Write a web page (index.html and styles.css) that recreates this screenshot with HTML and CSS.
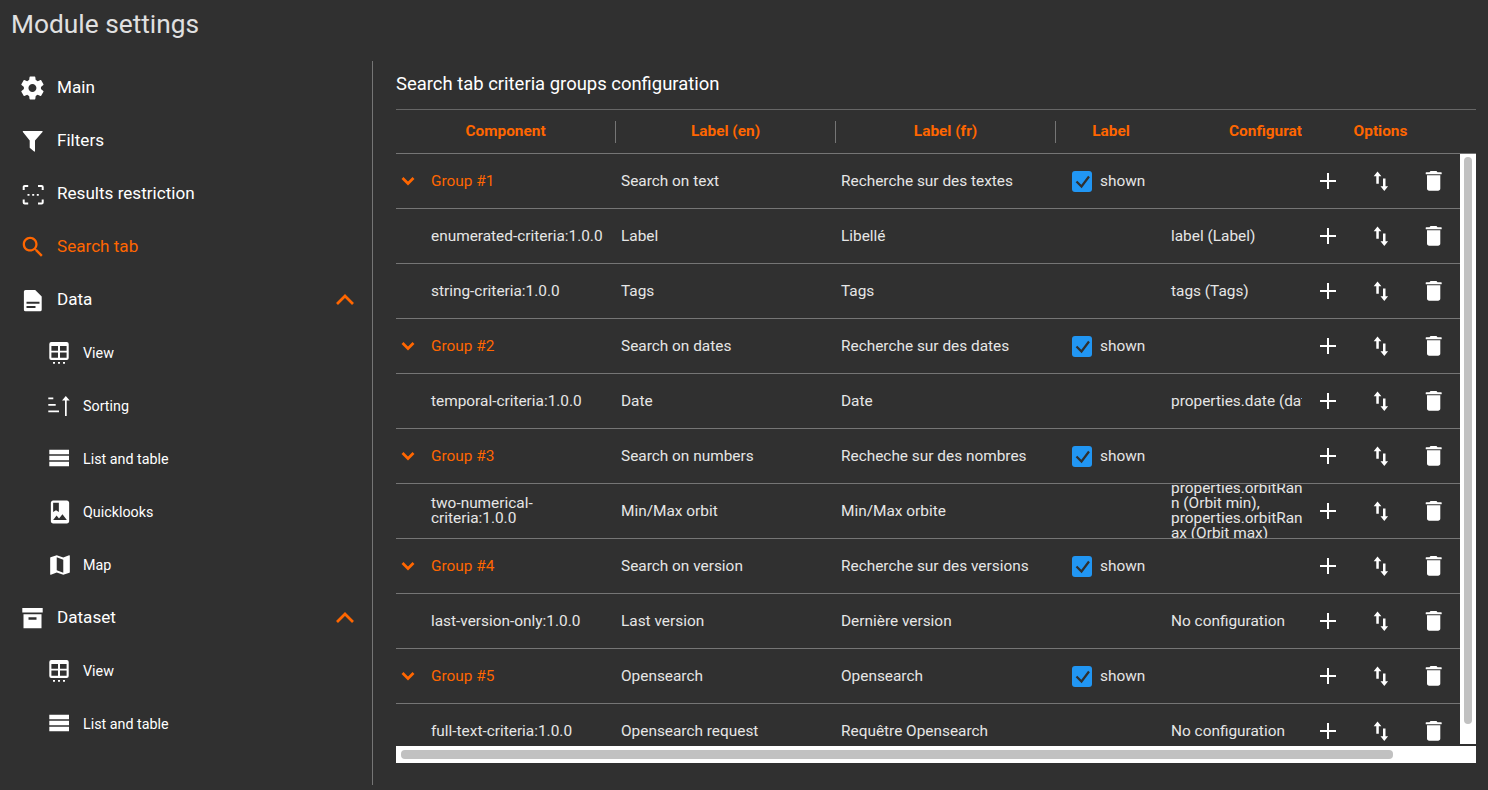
FILE: index.html
```html
<!DOCTYPE html>
<html lang="en">
<head>
  <meta charset="UTF-8" />
  <title>Module settings</title>
  <link rel="stylesheet" href="styles.css">
</head>
<body>
  <svg class="icon-defs" xmlns="http://www.w3.org/2000/svg">
    <symbol id="i-gear" viewBox="2 1.5 21 21"><path d="M19.43 12.98c.04-.32.07-.64.07-.98s-.03-.66-.07-.98l2.11-1.65c.19-.15.24-.42.12-.64l-2-3.46c-.12-.22-.39-.3-.61-.22l-2.49 1c-.52-.4-1.08-.73-1.69-.98l-.38-2.65C14.46 2.18 14.25 2 14 2h-4c-.25 0-.46.18-.49.42l-.38 2.65c-.61.25-1.17.59-1.69.98l-2.49-1c-.23-.09-.49 0-.61.22l-2 3.46c-.13.22-.07.49.12.64l2.11 1.65c-.04.32-.07.65-.07.98s.03.66.07.98l-2.11 1.65c-.19.15-.24.42-.12.64l2 3.46c.12.22.39.3.61.22l2.49-1c.52.4 1.08.73 1.69.98l.38 2.65c.03.24.24.42.49.42h4c.25 0 .46-.18.49-.42l.38-2.65c.61-.25 1.17-.59 1.69-.98l2.49 1c.23.09.49 0 .61-.22l2-3.46c.12-.22.07-.49-.12-.64l-2.11-1.65zM12 15.5c-1.93 0-3.5-1.57-3.5-3.5s1.57-3.5 3.5-3.5 3.5 1.57 3.5 3.5-1.57 3.5-3.5 3.5z"/></symbol>
    <symbol id="i-filter" viewBox="0 0 24 24"><path d="M2.4 2h18.6c.5 0 .8.6.5 1L14 11.5v10.6c0 .5-.5.7-.9.4l-4.4-3.7V11.5L1.9 3c-.3-.4 0-1 .5-1z"/></symbol>
    <symbol id="i-restrict" viewBox="0 0 24 24">
      <path class="line" d="M2.700 8V5a1 1 0 0 1 1-1h3.500M17 4h3.700a1 1 0 0 1 1 1v3M21.700 17.500v3a1 1 0 0 1-1 1H17M7.200 21.500H3.700a1 1 0 0 1-1-1v-3"/>
      <path d="M6.500 12h2v1.700h-2zM11.200 12h2v1.700h-2zM15.800 12h2v1.700h-2z"/>
    </symbol>
    <symbol id="i-search" viewBox="1.500 1.500 21 21"><path d="M15.500 14h-.79l-.28-.27C15.410 12.590 16 11.110 16 9.500 16 5.910 13.090 3 9.500 3S3 5.910 3 9.500 5.910 16 9.500 16c1.610 0 3.090-.59 4.230-1.570l.27.28v.79l5 4.990L20.490 19l-4.990-5zm-6 0C7.010 14 5 11.990 5 9.500S7.010 5 9.500 5 14 7.010 14 9.500 11.990 14 9.500 14z"/></symbol>
    <symbol id="i-doc" viewBox="0 0 24 24"><path fill-rule="evenodd" d="M4.500 2h9.700l6.500 6.500v13.200a1.600 1.600 0 0 1-1.600 1.600H4.500a1.600 1.600 0 0 1-1.600-1.600V3.600A1.600 1.600 0 0 1 4.500 2zM5.500 13.700v2h13v-2zM5.500 18v2h9v-2z"/></symbol>
    <symbol id="i-view" viewBox="0 0 24 24">
      <path fill-rule="evenodd" d="M3.300 1h15.400a2 2 0 0 1 2 2v14a2 2 0 0 1-2 2H3.300a2 2 0 0 1-2-2V3a2 2 0 0 1 2-2zM3.400 5v4.800h6.600V5zM12 5v4.800h6.600V5zM3.400 11.500v5.300h6.600v-5.300zM12 11.500v5.300h6.600v-5.300z"/>
      <path d="M5 21h2v1.700H5zM10 21h2v1.700h-2zM15 21h2v1.700h-2z"/>
    </symbol>
    <symbol id="i-sort" viewBox="0 0 24 24">
      <path d="M.3 3.500h5v1.700h-5zM.3 10h7.400v1.700H.3zM.3 16.500h10.700v1.700H.3zM17 5h1.700v17H17zM14 6.500L17.800 2l3.900 4.500z"/>
    </symbol>
    <symbol id="i-list" viewBox="0 0 24 24"><path d="M1.300 2.700h19.700v4.500H1.300zM1.300 8.700h19.700v4.500H1.300zM1.300 14.700h19.700v4.500H1.300z"/></symbol>
    <symbol id="i-album" viewBox="1.500 1.500 21 21"><path d="M18 2H6c-1.100 0-2 .9-2 2v16c0 1.100.9 2 2 2h12c1.100 0 2-.9 2-2V4c0-1.100-.9-2-2-2zM6 4h5v8l-2.500-1.500L6 12V4zm0 15l3-3.860 2.140 2.580 3-3.860L18 19H6z"/></symbol>
    <symbol id="i-map" viewBox="1 1 22 22"><path d="M20.500 3l-.16.03L15 5.100 9 3 3.360 4.900c-.21.07-.36.25-.36.480V20.500c0 .28.220.5.5.5l.16-.03L9 18.900l6 2.100 5.640-1.900c.21-.07.36-.25.36-.480V3.500c0-.28-.22-.5-.5-.5zM15 19l-6-2.110V5l6 2.110V19z"/></symbol>
    <symbol id="i-archive" viewBox="0 0 24 24"><path fill-rule="evenodd" d="M1.300 2h20.400v4.400H1.300zM2.500 8.300h18v14H2.500zM7.500 11.300v2.400h8v-2.400z"/></symbol>
    <symbol id="i-up" viewBox="0 0 24 24"><path class="line wide" d="M4 16l8-8 8 8"/></symbol>
    <symbol id="i-down" viewBox="0 0 24 24"><path class="line wide" d="M6.500 9l5.500 5.500L17.500 9"/></symbol>
    <symbol id="i-plus" viewBox="0 0 24 24"><path d="M11 4h2v7h7v2h-7v7h-2v-7H4v-2h7z"/></symbol>
    <symbol id="i-swap" viewBox="0 0 24 24"><path d="M8.500 2.500l3.900 4.700H9.800v7.600H7.300V7.200H4.700zM14 9.500h2.500v7.800h2.600L15.300 22l-3.800-4.700H14z"/></symbol>
    <symbol id="i-trash" viewBox="0 0 24 24"><path d="M8.500 2h6l1 1.300h3.700a.5.500 0 0 1 .5.500v1a.5.500 0 0 1-.5.500H4.200a.5.500 0 0 1-.5-.5v-1a.5.500 0 0 1 .5-.5h3.300zM5 6.300h13.300v13.200c0 1.300-.9 2.200-2.200 2.200H7.200c-1.300 0-2.200-.9-2.200-2.200z"/></symbol>
  </svg>

  <h1 class="page-title">Module settings</h1>

  <div class="layout">
    <nav class="sidebar">
      <a class="nav-item"><svg class="icon"><use href="#i-gear"/></svg><span>Main</span></a>
      <a class="nav-item"><svg class="icon"><use href="#i-filter"/></svg><span>Filters</span></a>
      <a class="nav-item"><svg class="icon"><use href="#i-restrict"/></svg><span>Results restriction</span></a>
      <a class="nav-item active"><svg class="icon"><use href="#i-search"/></svg><span>Search tab</span></a>
      <a class="nav-item"><svg class="icon"><use href="#i-doc"/></svg><span>Data</span><svg class="icon nav-toggle"><use href="#i-up"/></svg></a>
      <a class="nav-item sub"><svg class="icon"><use href="#i-view"/></svg><span>View</span></a>
      <a class="nav-item sub"><svg class="icon"><use href="#i-sort"/></svg><span>Sorting</span></a>
      <a class="nav-item sub"><svg class="icon"><use href="#i-list"/></svg><span>List and table</span></a>
      <a class="nav-item sub"><svg class="icon"><use href="#i-album"/></svg><span>Quicklooks</span></a>
      <a class="nav-item sub"><svg class="icon"><use href="#i-map"/></svg><span>Map</span></a>
      <a class="nav-item"><svg class="icon"><use href="#i-archive"/></svg><span>Dataset</span><svg class="icon nav-toggle"><use href="#i-up"/></svg></a>
      <a class="nav-item sub"><svg class="icon"><use href="#i-view"/></svg><span>View</span></a>
      <a class="nav-item sub"><svg class="icon"><use href="#i-list"/></svg><span>List and table</span></a>
    </nav>

    <main class="panel">
      <h2 class="panel-title">Search tab criteria groups configuration</h2>

      <div class="table-head">
        <div class="head-cell sep">Component</div>
        <div class="head-cell sep">Label (en)</div>
        <div class="head-cell sep">Label (fr)</div>
        <div class="head-cell">Label</div>
        <div class="head-cell head-config">Configuration</div>
        <div class="head-cell head-options">Options</div>
      </div>

      <div class="table-view">
        <div class="table-body">
          <div class="row group">
            <div class="cell cell-name"><svg class="chevron"><use href="#i-down"/></svg>Group #1</div>
            <div class="cell">Search on text</div>
            <div class="cell">Recherche sur des textes</div>
            <div class="cell cell-shown"><span class="checkbox"><svg viewBox="0 0 20 20"><path d="M4.500 10.500l5 5L17 5.500"/></svg></span>shown</div>
            <div class="cell cell-config"></div>
            <div class="cell-action"><svg class="icon"><use href="#i-plus"/></svg></div>
            <div class="cell-action"><svg class="icon"><use href="#i-swap"/></svg></div>
            <div class="cell-action"><svg class="icon"><use href="#i-trash"/></svg></div>
          </div>
          <div class="row">
            <div class="cell cell-name">enumerated-criteria:1.0.0</div>
            <div class="cell">Label</div>
            <div class="cell">Libellé</div>
            <div class="cell cell-shown"></div>
            <div class="cell cell-config"><span>label (Label)</span></div>
            <div class="cell-action"><svg class="icon"><use href="#i-plus"/></svg></div>
            <div class="cell-action"><svg class="icon"><use href="#i-swap"/></svg></div>
            <div class="cell-action"><svg class="icon"><use href="#i-trash"/></svg></div>
          </div>
          <div class="row">
            <div class="cell cell-name">string-criteria:1.0.0</div>
            <div class="cell">Tags</div>
            <div class="cell">Tags</div>
            <div class="cell cell-shown"></div>
            <div class="cell cell-config"><span>tags (Tags)</span></div>
            <div class="cell-action"><svg class="icon"><use href="#i-plus"/></svg></div>
            <div class="cell-action"><svg class="icon"><use href="#i-swap"/></svg></div>
            <div class="cell-action"><svg class="icon"><use href="#i-trash"/></svg></div>
          </div>
          <div class="row group">
            <div class="cell cell-name"><svg class="chevron"><use href="#i-down"/></svg>Group #2</div>
            <div class="cell">Search on dates</div>
            <div class="cell">Recherche sur des dates</div>
            <div class="cell cell-shown"><span class="checkbox"><svg viewBox="0 0 20 20"><path d="M4.500 10.500l5 5L17 5.500"/></svg></span>shown</div>
            <div class="cell cell-config"></div>
            <div class="cell-action"><svg class="icon"><use href="#i-plus"/></svg></div>
            <div class="cell-action"><svg class="icon"><use href="#i-swap"/></svg></div>
            <div class="cell-action"><svg class="icon"><use href="#i-trash"/></svg></div>
          </div>
          <div class="row">
            <div class="cell cell-name">temporal-criteria:1.0.0</div>
            <div class="cell">Date</div>
            <div class="cell">Date</div>
            <div class="cell cell-shown"></div>
            <div class="cell cell-config"><span>properties.date (date)</span></div>
            <div class="cell-action"><svg class="icon"><use href="#i-plus"/></svg></div>
            <div class="cell-action"><svg class="icon"><use href="#i-swap"/></svg></div>
            <div class="cell-action"><svg class="icon"><use href="#i-trash"/></svg></div>
          </div>
          <div class="row group">
            <div class="cell cell-name"><svg class="chevron"><use href="#i-down"/></svg>Group #3</div>
            <div class="cell">Search on numbers</div>
            <div class="cell">Recheche sur des nombres</div>
            <div class="cell cell-shown"><span class="checkbox"><svg viewBox="0 0 20 20"><path d="M4.500 10.500l5 5L17 5.500"/></svg></span>shown</div>
            <div class="cell cell-config"></div>
            <div class="cell-action"><svg class="icon"><use href="#i-plus"/></svg></div>
            <div class="cell-action"><svg class="icon"><use href="#i-swap"/></svg></div>
            <div class="cell-action"><svg class="icon"><use href="#i-trash"/></svg></div>
          </div>
          <div class="row">
            <div class="cell cell-name">two-numerical-criteria:1.0.0</div>
            <div class="cell">Min/Max orbit</div>
            <div class="cell">Min/Max orbite</div>
            <div class="cell cell-shown"></div>
            <div class="cell cell-config"><span>properties.orbitRangeMin (Orbit min), properties.orbitRangeMax (Orbit max)</span></div>
            <div class="cell-action"><svg class="icon"><use href="#i-plus"/></svg></div>
            <div class="cell-action"><svg class="icon"><use href="#i-swap"/></svg></div>
            <div class="cell-action"><svg class="icon"><use href="#i-trash"/></svg></div>
          </div>
          <div class="row group">
            <div class="cell cell-name"><svg class="chevron"><use href="#i-down"/></svg>Group #4</div>
            <div class="cell">Search on version</div>
            <div class="cell">Recherche sur des versions</div>
            <div class="cell cell-shown"><span class="checkbox"><svg viewBox="0 0 20 20"><path d="M4.500 10.500l5 5L17 5.500"/></svg></span>shown</div>
            <div class="cell cell-config"></div>
            <div class="cell-action"><svg class="icon"><use href="#i-plus"/></svg></div>
            <div class="cell-action"><svg class="icon"><use href="#i-swap"/></svg></div>
            <div class="cell-action"><svg class="icon"><use href="#i-trash"/></svg></div>
          </div>
          <div class="row">
            <div class="cell cell-name">last-version-only:1.0.0</div>
            <div class="cell">Last version</div>
            <div class="cell">Dernière version</div>
            <div class="cell cell-shown"></div>
            <div class="cell cell-config"><span>No configuration</span></div>
            <div class="cell-action"><svg class="icon"><use href="#i-plus"/></svg></div>
            <div class="cell-action"><svg class="icon"><use href="#i-swap"/></svg></div>
            <div class="cell-action"><svg class="icon"><use href="#i-trash"/></svg></div>
          </div>
          <div class="row group">
            <div class="cell cell-name"><svg class="chevron"><use href="#i-down"/></svg>Group #5</div>
            <div class="cell">Opensearch</div>
            <div class="cell">Opensearch</div>
            <div class="cell cell-shown"><span class="checkbox"><svg viewBox="0 0 20 20"><path d="M4.500 10.500l5 5L17 5.500"/></svg></span>shown</div>
            <div class="cell cell-config"></div>
            <div class="cell-action"><svg class="icon"><use href="#i-plus"/></svg></div>
            <div class="cell-action"><svg class="icon"><use href="#i-swap"/></svg></div>
            <div class="cell-action"><svg class="icon"><use href="#i-trash"/></svg></div>
          </div>
          <div class="row">
            <div class="cell cell-name">full-text-criteria:1.0.0</div>
            <div class="cell">Opensearch request</div>
            <div class="cell">Requêtre Opensearch</div>
            <div class="cell cell-shown"></div>
            <div class="cell cell-config"><span>No configuration</span></div>
            <div class="cell-action"><svg class="icon"><use href="#i-plus"/></svg></div>
            <div class="cell-action"><svg class="icon"><use href="#i-swap"/></svg></div>
            <div class="cell-action"><svg class="icon"><use href="#i-trash"/></svg></div>
          </div>
        </div>
        <div class="scroll-y"><div class="thumb-y"></div></div>
      </div>
      <div class="scroll-x"><div class="thumb-x"></div></div>
    </main>
  </div>
</body>
</html>
```

FILE: styles.css
```css
* {
  box-sizing: border-box;
}
body {
  margin: 0;
  height: 790px;
  overflow: hidden;
  background: #303030;
  color: #fff;
  font-family: Roboto, sans-serif;
  font-size: 15.4px;
}
.icon-defs {
  display: none;
}
.icon {
  width: 24px;
  height: 24px;
  flex: none;
  fill: currentColor;
}
.line {
  fill: none;
  stroke: currentColor;
  stroke-width: 2;
}
.line.wide {
  stroke-width: 2.7;
}

.page-title {
  margin: 0;
  height: 61px;
  padding: 8px 0 0 11px;
  font-size: 26.3px;
  line-height: 33px;
  font-weight: 400;
  color: #e0e0e0;
}
.layout {
  display: flex;
}

/* left menu */
.sidebar {
  width: 373px;
  height: 724px;
  flex: none;
  border-right: 1px solid #757575;
}
.nav-item {
  display: flex;
  align-items: center;
  height: 53px;
  padding: 0 15px 0 21px;
  gap: 12px;
  font-size: 17.1px;
}
.nav-item span {
  padding-bottom: 2px;
}
.nav-item.sub {
  padding-left: 48px;
  gap: 11px;
  font-size: 14.3px;
}
.nav-item.sub span {
  padding-bottom: 0;
}
.nav-item.active {
  color: #ff6600;
}
.nav-toggle {
  margin-left: auto;
  color: #ff6600;
}

/* table */
.panel {
  width: 1103px;
  padding-left: 23px;
}
.panel-title {
  margin: 0;
  height: 48px;
  font-size: 18.45px;
  line-height: 46px;
  font-weight: 400;
}
.table-head,
.row {
  display: grid;
  grid-template-columns: 220px 220px 220px 110px 136px 53px 53px 53px;
}
.table-head {
  height: 45px;
  align-items: center;
  border-top: 1px solid #666;
  border-bottom: 1px solid #757575;
  color: #ff6600;
  font-weight: 700;
}
.head-cell {
  height: 22px;
  line-height: 20px;
  text-align: center;
  white-space: nowrap;
  overflow: hidden;
}
.head-cell.sep {
  border-right: 1px solid #757575;
}
.head-config {
  padding-left: 63px;
  text-align: left;
}
.head-options {
  grid-column: span 3;
  padding-right: 2px;
}
.table-view {
  display: flex;
  height: 590px;
  overflow: hidden;
}
.table-body {
  width: 1064px;
  flex: none;
}
.row {
  height: 55px;
  border-bottom: 1px solid #757575;
  color: #e6e6e6;
  line-height: 15px;
}
.cell {
  display: flex;
  align-items: center;
  height: 54px;
  padding: 0 5px;
  overflow: hidden;
}
.cell-name {
  padding-left: 35px;
}
.group .cell-name {
  position: relative;
  color: #ff6600;
}
.chevron {
  position: absolute;
  left: 0;
  top: 15px;
  width: 24px;
  height: 24px;
  fill: none;
}
.cell-shown {
  padding-left: 16px;
}
.checkbox {
  display: flex;
  width: 20px;
  height: 21px;
  margin-right: 8px;
  flex: none;
  background: #2196f3;
  border-radius: 3px;
}
.checkbox svg {
  width: 20px;
  height: 20px;
  fill: none;
  stroke: #303030;
  stroke-width: 2.2;
}
/* the real column is wider than what is left visible before the options */
.cell-config {
  padding-right: 0;
}
.cell-config span {
  flex: none;
  width: 170px;
  overflow-wrap: anywhere;
}
.cell-action {
  display: flex;
  align-items: center;
  justify-content: center;
  height: 54px;
  padding-right: 2px;
  color: #fff;
}

/* scrollbars */
.scroll-y {
  width: 16px;
  flex: none;
  padding: 3px 4px;
  background: #fff;
}
.thumb-y {
  height: 567px;
  background: #c1c1c1;
  border-radius: 4px;
}
.scroll-x {
  height: 17px;
  margin-top: 2px;
  padding: 4px 5px;
  background: #fff;
}
.thumb-x {
  width: 992px;
  height: 9px;
  background: #c1c1c1;
  border-radius: 4px;
}
```
